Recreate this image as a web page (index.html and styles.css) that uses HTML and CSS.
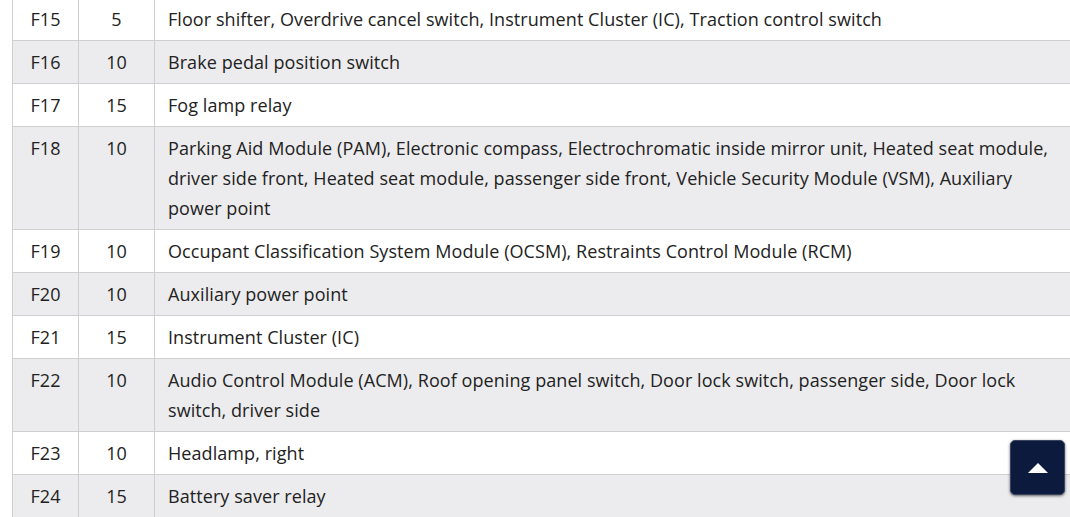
FILE: index.html
```html
<!DOCTYPE html>
<html>
<head>
<meta charset="utf-8">
<link rel="stylesheet" href="styles.css">
</head>
<body>
<table class="fuses">
  <colgroup><col class="c-fuse"><col class="c-amp"><col class="c-desc"></colgroup>
  <tbody>
    <tr><td>F15</td><td>5</td><td>Floor shifter, Overdrive cancel switch, Instrument Cluster (IC), Traction control switch</td></tr>
    <tr><td>F16</td><td>10</td><td>Brake pedal position switch</td></tr>
    <tr><td>F17</td><td>15</td><td>Fog lamp relay</td></tr>
    <tr><td>F18</td><td>10</td><td>Parking Aid Module (PAM), Electronic compass, Electrochromatic inside mirror unit, Heated seat module, driver side front, Heated seat module, passenger side front, Vehicle Security Module (VSM), Auxiliary power point</td></tr>
    <tr><td>F19</td><td>10</td><td>Occupant Classification System Module (OCSM), Restraints Control Module (RCM)</td></tr>
    <tr><td>F20</td><td>10</td><td>Auxiliary power point</td></tr>
    <tr><td>F21</td><td>15</td><td>Instrument Cluster (IC)</td></tr>
    <tr><td>F22</td><td>10</td><td>Audio Control Module (ACM), Roof opening panel switch, Door lock switch, passenger side, Door lock switch, driver side</td></tr>
    <tr><td>F23</td><td>10</td><td>Headlamp, right</td></tr>
    <tr><td>F24</td><td>15</td><td>Battery saver relay</td></tr>
  </tbody>
</table>
<a class="to-top" href="#" aria-label="Back to top"><span class="arrow"></span></a>
</body>
</html>
```
FILE: styles.css
```css
html, body {
  margin: 0;
  padding: 0;
  background: #fff;
  overflow: hidden;
}
body {
  font-family: "Open Sans", "Liberation Sans", sans-serif;
  font-size: 18px;
  letter-spacing: 0.07px;
  color: #222;
}
.fuses {
  border-collapse: collapse;
  table-layout: fixed;
  width: 1060px;
  margin: -3px 0 0 12px;
}
.c-fuse { width: 66px; }
.c-amp { width: 76px; }
.fuses td {
  border: 1px solid #cfcfcf;
  padding: 6px 13px;
  line-height: 30px;
  vertical-align: top;
}
.fuses td:nth-child(1),
.fuses td:nth-child(2) {
  text-align: center;
  padding-left: 0;
  padding-right: 0;
}
.fuses tr:nth-child(even) td {
  background: #ececee;
}
.to-top {
  position: fixed;
  left: 1010px;
  top: 440px;
  width: 55px;
  height: 55px;
  box-sizing: border-box;
  background: #0c1a3d;
  border: 1px solid #3a4461;
  border-radius: 5px;
  box-shadow: 0 1px 3px rgba(0,0,0,0.6);
  display: flex;
  align-items: center;
  justify-content: center;
}
.arrow {
  width: 0;
  height: 0;
  border-left: 10px solid transparent;
  border-right: 10px solid transparent;
  border-bottom: 10px solid #fff;
}
```
